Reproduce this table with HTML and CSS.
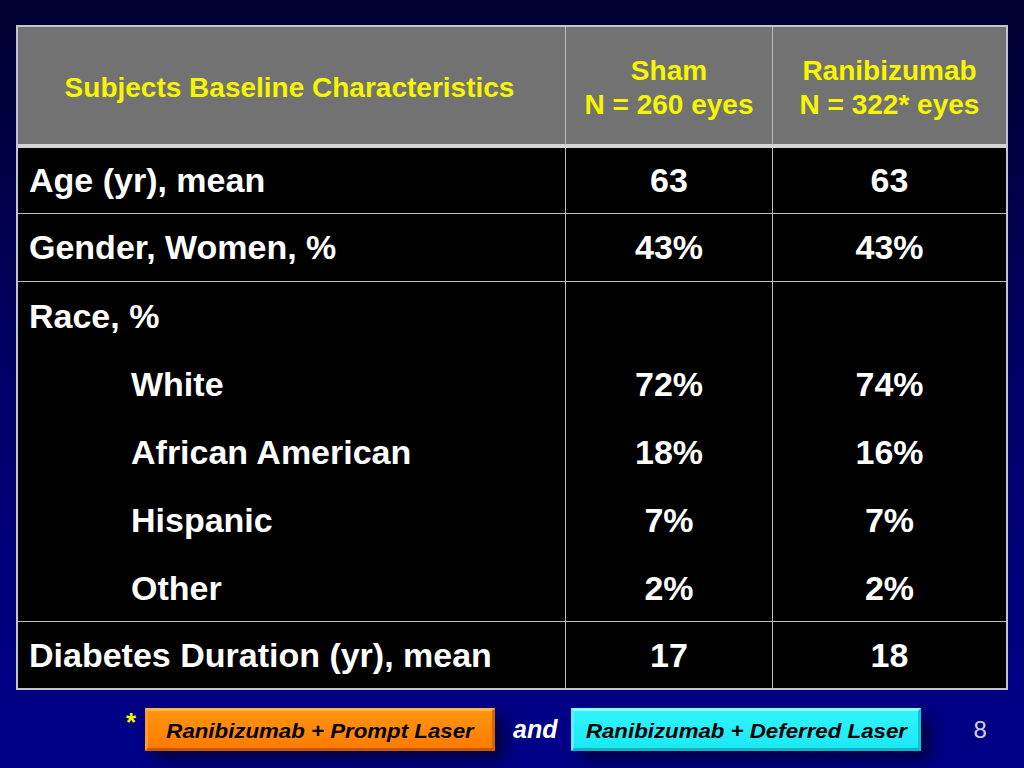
FILE: index.html
```html
<!DOCTYPE html>
<html>
<head>
<meta charset="utf-8">
<link rel="stylesheet" href="styles.css">
</head>
<body>
<div class="slide">
  <div class="tbl">
    <div class="cell head label-head">Subjects Baseline Characteristics</div>
    <div class="cell head mid">Sham<br>N = 260 eyes</div>
    <div class="cell head last">Ranibizumab<br>N = 322* eyes</div>

    <div class="cell label r1">Age (yr), mean</div>
    <div class="cell val mid r1">63</div>
    <div class="cell val last r1">63</div>

    <div class="cell label r2">Gender, Women, %</div>
    <div class="cell val mid r2">43%</div>
    <div class="cell val last r2">43%</div>

    <div class="cell label r3">
      <div class="line">Race, %</div>
      <div class="line indent">White</div>
      <div class="line indent">African American</div>
      <div class="line indent">Hispanic</div>
      <div class="line indent">Other</div>
    </div>
    <div class="cell val mid r3">
      <div class="line"></div>
      <div class="line">72%</div>
      <div class="line">18%</div>
      <div class="line">7%</div>
      <div class="line">2%</div>
    </div>
    <div class="cell val last r3">
      <div class="line"></div>
      <div class="line">74%</div>
      <div class="line">16%</div>
      <div class="line">7%</div>
      <div class="line">2%</div>
    </div>

    <div class="cell label r4 bottom">Diabetes Duration (yr), mean</div>
    <div class="cell val mid r4 bottom">17</div>
    <div class="cell val last r4 bottom">18</div>
  </div>

  <div class="footnote">
    <span class="star">*</span>
    <div class="pill orange"><span>Ranibizumab + Prompt Laser</span></div>
    <span class="and">and</span>
    <div class="pill cyan"><span>Ranibizumab + Deferred Laser</span></div>
    <span class="pagenum">8</span>
  </div>
</div>
</body>
</html>
```

FILE: styles.css
```css
html, body {
  margin: 0;
  padding: 0;
}
body {
  width: 1024px;
  height: 768px;
  overflow: hidden;
  background: linear-gradient(to bottom, #000030 0%, #00004a 25%, #000066 50%, #00007a 75%, #000088 100%);
  font-family: "Liberation Sans", Arial, sans-serif;
}
.slide {
  padding: 25px 16px 0 16px;
}
.tbl {
  width: 992px;
  box-sizing: border-box;
  border: 2px solid #c4c4cc;
  display: grid;
  grid-template-columns: 548px 207px 233px;
  grid-template-rows: 121px 66px 68px 340px 66px;
  background: #000;
}
.cell {
  box-sizing: border-box;
  border-right: 1px solid #bdbdbd;
  border-bottom: 1px solid #bdbdbd;
  color: #fff;
  font-weight: bold;
  font-size: 34px;
}
.cell.last {
  border-right: none;
}
.cell.bottom {
  border-bottom: none;
}
.head {
  background: #727272;
  color: #f6f600;
  font-size: 28px;
  line-height: 34px;
  border-bottom: 4px solid #d6d6d6;
  display: flex;
  align-items: center;
  justify-content: center;
  text-align: center;
  padding-top: 5px;
}
.label-head {
  padding-right: 4px;
}
.label {
  padding-left: 11px;
  display: flex;
  align-items: center;
}
.label.r3 {
  display: block;
}
.val {
  display: flex;
  align-items: center;
  justify-content: center;
  text-align: center;
}
.val.r3 {
  display: block;
}
.line {
  height: 68px;
  line-height: 68px;
}
.indent {
  padding-left: 102px;
}
.footnote {
  display: flex;
  align-items: center;
  margin-top: 18px;
  padding-left: 110px;
  height: 43px;
}
.star {
  color: #f4f400;
  font-weight: bold;
  font-size: 26px;
  align-self: flex-start;
  margin-top: -1px;
  width: 10px;
}
.pill {
  box-sizing: border-box;
  width: 350px;
  height: 43px;
  border: 3px solid;
  display: flex;
  align-items: center;
  justify-content: center;
  box-shadow: 10px 10px 14px rgba(0, 0, 20, 0.55);
}
.pill span {
  font-style: italic;
  font-weight: bold;
  font-size: 21px;
  color: #000;
  display: inline-block;
  transform: scaleX(1.06);
  padding-top: 2px;
}
.orange {
  margin-left: 9px;
  background: linear-gradient(to bottom, #ff9410, #ff7c00);
  border-top-color: #ffb848;
  border-left-color: #ff9a2c;
  border-right-color: #d86400;
  border-bottom-color: #c85800;
}
.cyan {
  margin-left: 14px;
  background: linear-gradient(to bottom, #30f4fc, #1ce8f4);
  border-top-color: #8cfaff;
  border-left-color: #58f2fa;
  border-right-color: #10c4d4;
  border-bottom-color: #0eb4c4;
}
.and {
  margin-left: 18px;
  color: #fff;
  font-style: italic;
  font-weight: bold;
  font-size: 25px;
}
.pagenum {
  margin-left: 52px;
  color: #d0d0e4;
  font-size: 24px;
}
```
